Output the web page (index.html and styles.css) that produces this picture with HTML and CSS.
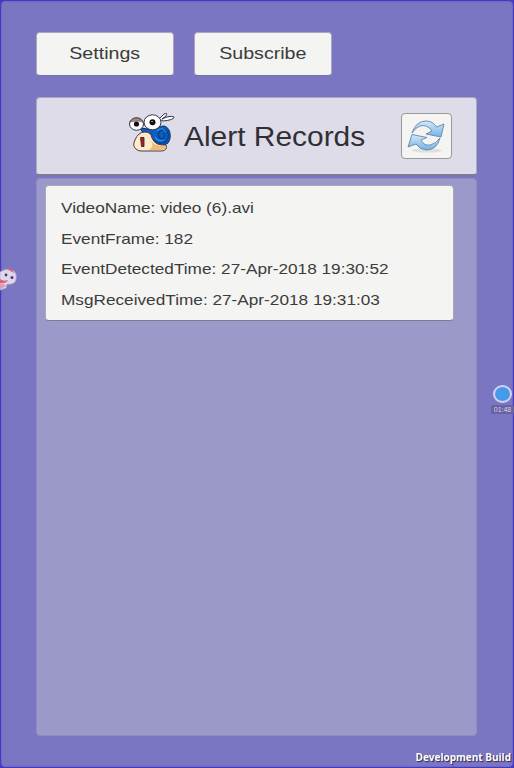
FILE: index.html
```html
<!DOCTYPE html>
<html lang="en">
<head>
<meta charset="utf-8">
<title>Alert Records</title>
<link rel="stylesheet" href="styles.css">
</head>
<body>
<main class="app">
  <nav class="toolbar">
    <button class="button"><span class="wide">Settings</span></button>
    <button class="button"><span class="wide">Subscribe</span></button>
  </nav>
  <header class="header">
    <svg class="snail" viewBox="0 0 48 42">
      <g stroke="#303547" stroke-width="1">
        <path fill="#fff" d="M31 7 36 2Q40 0 38 4L34 7Q42 3 46 5Q46 8 35 9Z"/>
        <path fill="#0d5dbd" stroke="#102c65" d="M12 16 20 17 30 16Q37 11 41 18Q44 25 40 31L31 36 19 28Z"/>
        <path fill="none" stroke="#083e8d" stroke-width="1.300" d="M25 27Q28 33 35 31Q42 28 40 21Q37 15 31 20Q29 26 34 27Q38 25 36 21"/>
        <path fill="none" stroke="#3294e6" stroke-width="1.200" d="M27 25Q30 30 36 28M29 19Q34 14 38 20"/>
        <path fill="#ffeacc" stroke="#4e3c36" d="M8 37Q4 34 7 28Q10 20 17 20Q23 20 24 26Q27 34 38 33Q40 38 34 39H13Q10 39 8 37Z"/>
        <path fill="#edbd79" stroke="none" d="M22 28Q27 35 38 34Q38 38 32 38H21Q27 34 22 28Z"/>
        <ellipse cx="8.500" cy="12" rx="7" ry="6.300" fill="#fff"/>
        <path fill="#ad8b75" stroke-width=".5" d="M2 10Q4 6 9 6Q14 7 15 10Q10 8 2 10Z"/>
        <ellipse cx="24.500" cy="10.300" rx="8.500" ry="7.500" fill="#fff"/>
      </g>
      <circle cx="8.500" cy="12" r="2.600" fill="#111"/>
      <circle cx="24.500" cy="10.300" r="3" fill="#111"/>
      <circle cx="24" cy="9.600" r=".7" fill="#fff"/>
      <path fill="#ac2227" stroke="#291f22" stroke-width=".8" d="M12.500 25.500H16V34.500H13.500Z"/>
    </svg>
    <h1 class="title"><span class="wide">Alert Records</span></h1>
    <button class="refresh" aria-label="Refresh">
      <svg viewBox="0 0 41 36">
        <defs>
          <linearGradient id="blue" x2="0" y2="1"><stop stop-color="#d3e9f8"/><stop offset="1" stop-color="#76b1e4"/></linearGradient>
        </defs>
        <ellipse cx="21" cy="32.500" rx="15" ry="2" fill="#dededb"/>
        <g fill="url(#blue)" stroke="#6387ac" stroke-width=".9" stroke-linejoin="round">
          <path d="M6 15Q10 3 20 3Q27 3 30.500 9L38 6 35 19 20 16 26 13Q21 6 14 8Q9 10 6 15Z"/>
          <path d="M2 29 6 16.500 21 19.500 15 22Q18 28 24 27Q30 26 34 20Q31 32 20 32Q13 31 10 26Z"/>
        </g>
      </svg>
    </button>
  </header>
  <section class="records">
    <article class="record">
      <p><span class="wide">VideoName: video (6).avi</span></p>
      <p><span class="wide">EventFrame: 182</span></p>
      <p><span class="wide">EventDetectedTime: 27-Apr-2018 19:30:52</span></p>
      <p><span class="wide">MsgReceivedTime: 27-Apr-2018 19:31:03</span></p>
    </article>
  </section>
</main>
<svg class="mascot" viewBox="0 0 18 24">
  <path fill="#ded7ec" stroke="#b9a8cf" stroke-width=".7" d="M0 4Q8-1 14 3Q18 8 15 14Q12 17 7 16L6 20 0 22Z"/>
  <path fill="#d96478" d="M7 1Q12-1 14 5Q10 3 7 1ZM0 11Q4 14 8 12Q6 16 0 15Z"/>
  <path fill="#dc9db8" d="M0 16Q4 15 6 18L1 21H0Z"/>
  <circle cx="6" cy="7" r="1.400" fill="#4c3b68"/><circle cx="12" cy="9.500" r="1.500" fill="#4c3b68"/>
</svg>
<div class="recorder"><i class="dot"></i><span class="time">01:48</span></div>
<div class="build">Development Build</div>
</body>
</html>
```
FILE: styles.css
```css
* { box-sizing: border-box; }
body {
  margin: 0;
  height: 768px;
  overflow: hidden;
  position: relative;
  background: #4638c5;
  font-family: "Liberation Sans", Arial, sans-serif;
  color: #3c3c3c;
}
.app {
  height: 768px;
  padding: 31px 36px 32px 35px;
  border: 1px solid #4638c5;
  border-radius: 5px;
  background: #7b76c2;
  box-shadow: inset 0 0 2px #5147bd;
}
button { padding: 0; border: 0; color: inherit; font-family: inherit; }
.toolbar { display: flex; gap: 20px; height: 44px; }
.button {
  width: 138px;
  height: 44px;
  border: 1px solid #aaa7bd;
  border-bottom-color: #77759a;
  border-radius: 4px;
  background: #f4f4f2;
  font-size: 17px;
}
.wide { display: inline-block; white-space: nowrap; transform: scaleX(1.155); }
.header {
  display: flex;
  align-items: center;
  width: 441px;
  height: 79px;
  margin-top: 21px;
  padding: 0 24px 0 91px;
  border: 1px solid #aaa8c3;
  border-bottom: 2px solid #7d7b96;
  border-radius: 4px;
  background: #dddce8;
}
.snail { width: 48px; height: 42px; flex: none; margin-top: -7px; }
.title { margin: 2px 0 0 8px; font-size: 27px; line-height: 32px; font-weight: 400; color: #303034; }
.title .wide { transform: scaleX(1.108); transform-origin: left; }
.refresh {
  width: 51px;
  height: 46px;
  margin-left: auto;
  padding: 3px 4px;
  border: 1px solid #999;
  border-radius: 4px;
  background: #f4f4f3;
}
.refresh svg { display: block; width: 41px; height: 36px; }
.records {
  width: 441px;
  height: 558px;
  margin-top: 2px;
  padding: 6px 8px;
  border: 1px solid #918dbb;
  border-radius: 4px;
  background: #9b98ca;
}
.record {
  width: 409px;
  height: 136px;
  padding: 7px 0 0 15px;
  border: 1px solid #aaa7bd;
  border-bottom-color: #7d7b99;
  border-radius: 4px;
  background: #f4f4f3;
}
.record p { height: 30.670px; margin: 0; font-size: 14.500px; line-height: 30.670px; }
.record .wide { transform: scaleX(1.187); transform-origin: left; }
.mascot { position: absolute; left: 0; top: 268px; width: 18px; height: 24px; }
.recorder {
  position: absolute;
  right: 0;
  top: 385px;
  width: 23px;
  display: flex;
  flex-direction: column;
  align-items: center;
}
.dot { width: 19px; height: 18px; border: 2px solid #d2d3ef; border-radius: 50%; background: #459bea; }
.time {
  width: 23px;
  height: 9px;
  margin-top: 2px;
  border-radius: 2px;
  background: #6962a1;
  color: #d8d4eb;
  font-size: 7px;
  line-height: 9px;
  text-align: center;
}
.build {
  position: absolute;
  right: 3px;
  bottom: 4px;
  color: #fff;
  font: 700 10px/14px "Open Sans", sans-serif;
  text-shadow: 1px 1px 1px #29264b;
}
```
